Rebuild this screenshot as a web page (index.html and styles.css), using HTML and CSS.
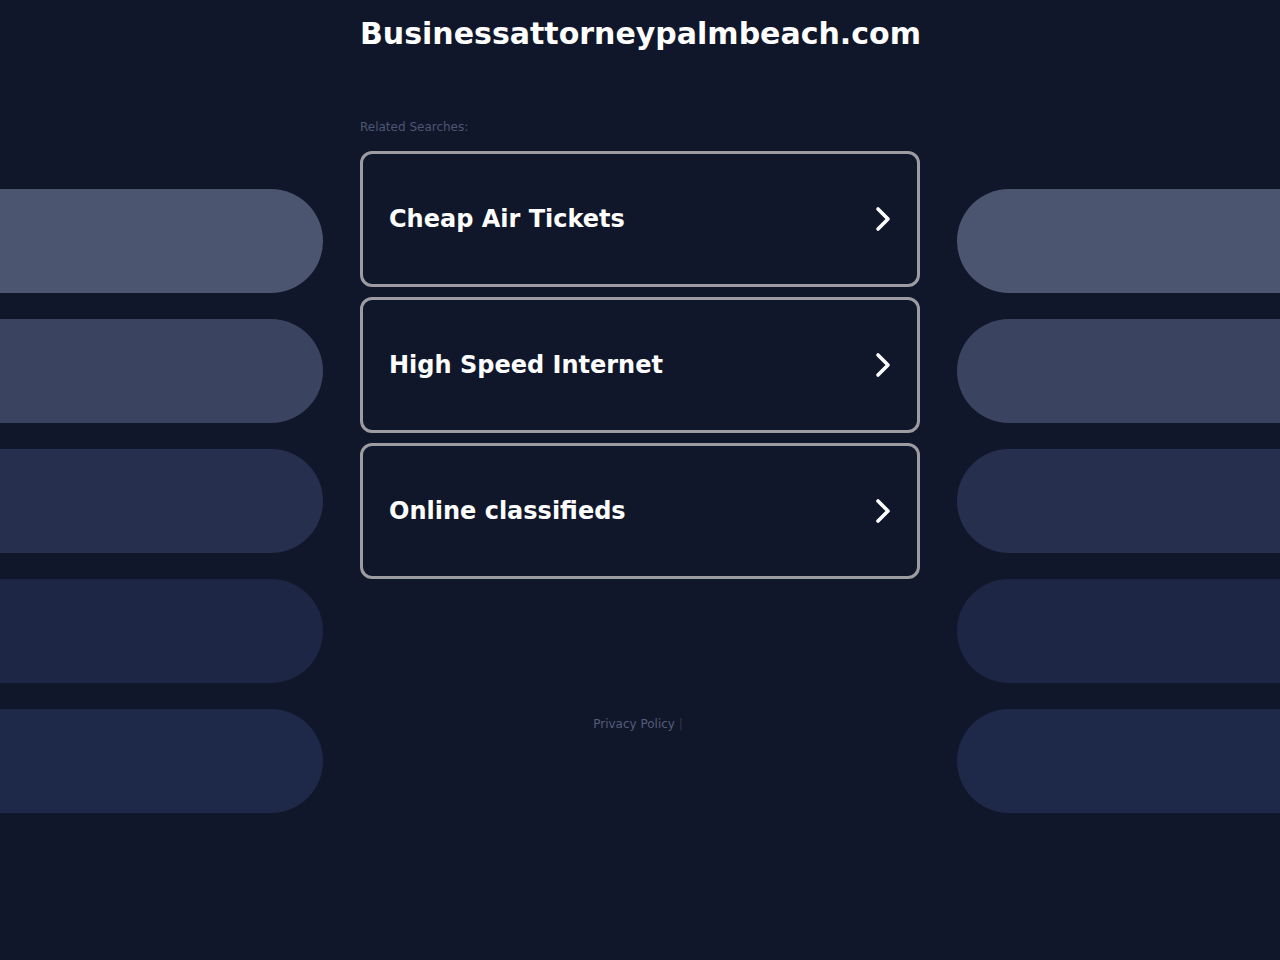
FILE: index.html
```html
<!DOCTYPE html>
<html lang="en">
<head>
    <meta charset="UTF-8">
    <meta name="viewport" content="width=device-width, initial-scale=1.0">
    <title>Businessattorneypalmbeach.com</title>
    <link rel="stylesheet" href="styles.css">
</head>
<body>
    <div class="page">
        <div class="side side-left">
            <div class="pill p1"></div>
            <div class="pill p2"></div>
            <div class="pill p3"></div>
            <div class="pill p4"></div>
            <div class="pill p5"></div>
        </div>

        <div class="main">
            <h1 class="domain">Businessattorneypalmbeach.com</h1>
            <div class="related">Related Searches:</div>
            <div class="links">
                <a class="link" href="#">
                    <span>Cheap Air Tickets</span>
                    <svg class="chev" viewBox="0 0 20 28" width="20" height="28"><path d="M5 4 L15 14 L5 24"/></svg>
                </a>
                <a class="link" href="#">
                    <span>High Speed Internet</span>
                    <svg class="chev" viewBox="0 0 20 28" width="20" height="28"><path d="M5 4 L15 14 L5 24"/></svg>
                </a>
                <a class="link" href="#">
                    <span>Online classifieds</span>
                    <svg class="chev" viewBox="0 0 20 28" width="20" height="28"><path d="M5 4 L15 14 L5 24"/></svg>
                </a>
            </div>
            <div class="footer">
                <a href="#">Privacy Policy</a> <span class="sep">|</span>
            </div>
        </div>

        <div class="side side-right">
            <div class="pill p1"></div>
            <div class="pill p2"></div>
            <div class="pill p3"></div>
            <div class="pill p4"></div>
            <div class="pill p5"></div>
        </div>
    </div>
</body>
</html>
```

FILE: styles.css
```css
body {
    margin: 0;
    background-color: #11172b;
    font-family: "DejaVu Sans", sans-serif;
    color: #fff;
    height: 960px;
    overflow: hidden;
}
.page {
    display: grid;
    grid-template-columns: 1fr 560px 1fr;
}
.side {
    display: flex;
    flex-direction: column;
    gap: 26px;
    padding-top: 189px;
}
.pill {
    height: 104px;
}
.side-left .pill {
    margin-right: 37px;
    border-radius: 0 52px 52px 0;
}
.side-right .pill {
    margin-left: 37px;
    border-radius: 52px 0 0 52px;
}
.p1 { background-color: #4b5570; }
.p2 { background-color: #3a4461; }
.p3 { background-color: #262f4d; }
.p4 { background-color: #1d2645; }
.p5 { background-color: #1e2848; }

.main {
    display: flex;
    flex-direction: column;
}
.domain {
    margin: 15px 0 0;
    font-size: 30px;
    font-weight: bold;
    text-align: center;
    line-height: 38px;
    white-space: nowrap;
}
.related {
    margin-top: 67px;
    font-size: 12px;
    color: #4c5672;
    line-height: 14px;
}
.links {
    margin-top: 17px;
    display: flex;
    flex-direction: column;
    gap: 10px;
}
.link {
    display: flex;
    align-items: center;
    justify-content: space-between;
    height: 130px;
    padding: 0 24px 0 26px;
    border: 3px solid #9c9ca1;
    border-radius: 12px;
    color: #fff;
    text-decoration: none;
    font-size: 24px;
    font-weight: bold;
}
.chev {
    fill: none;
    stroke: #fff;
    stroke-width: 3.6;
    stroke-linecap: round;
    stroke-linejoin: round;
}
.footer {
    margin-top: 138px;
    margin-right: 4px;
    text-align: center;
    font-size: 12px;
    color: #535d78;
}
.footer a {
    color: #535d78;
    text-decoration: none;
}
.footer .sep {
    color: #2e3549;
}
```
